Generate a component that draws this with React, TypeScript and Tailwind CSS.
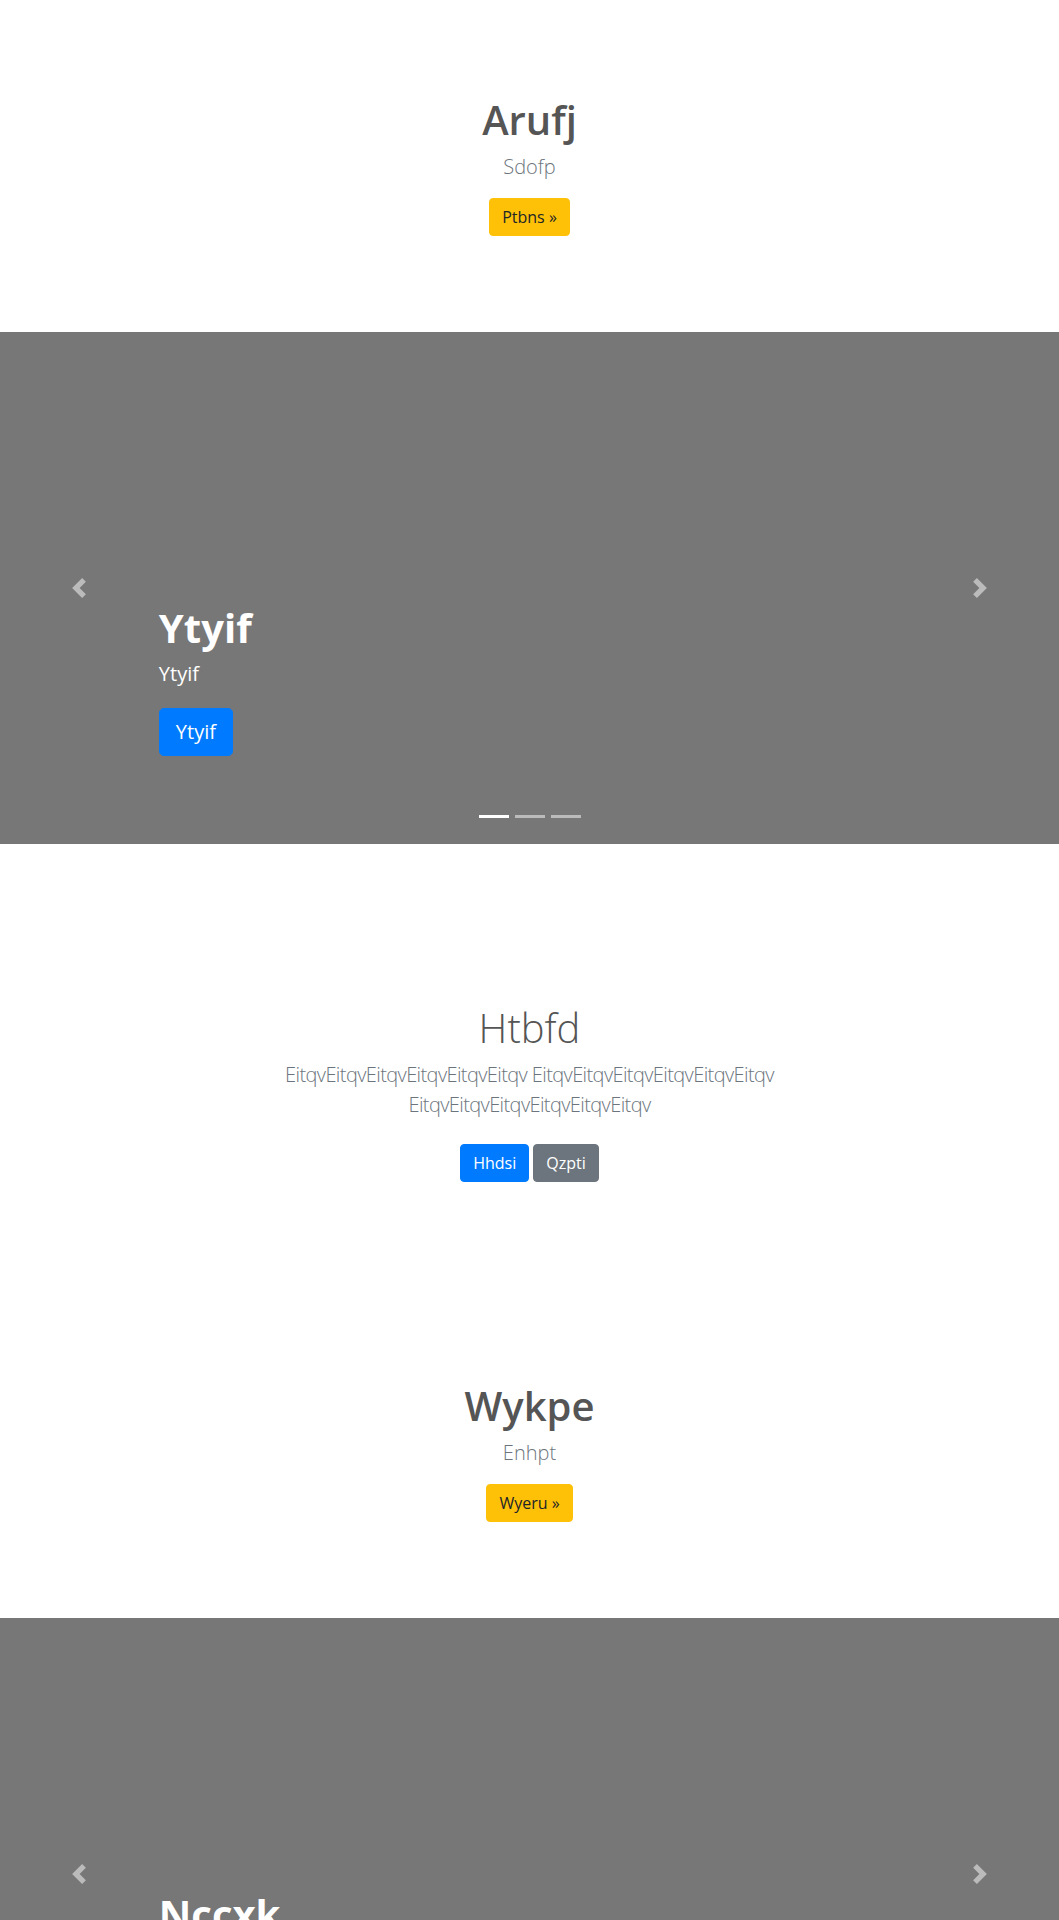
import React from "react";

type Slide = {
  title: string;
  text: string;
  cta: string;
};

function Chevron({ dir }: { dir: "prev" | "next" }) {
  // same 8x8 glyph Bootstrap uses for its carousel controls
  const d =
    dir === "prev"
      ? "M5.25 0l-4 4 4 4 1.5-1.5-2.5-2.5 2.5-2.5-1.5-1.5z"
      : "M2.75 0l-1.5 1.5 2.5 2.5-2.5 2.5 1.5 1.5 4-4-4-4z";
  return (
    <svg width="20" height="20" viewBox="0 0 8 8" fill="#fff">
      <path d={d} />
    </svg>
  );
}

function Carousel({ slide }: { slide: Slide }) {
  return (
    <section className="relative h-[512px] bg-[#777] flex flex-col justify-end px-[15%] pb-[88px] overflow-hidden">
      <div className="text-left text-white">
        <h1 className="text-[40px] leading-[1.2] font-bold mb-2">{slide.title}</h1>
        <p className="text-xl leading-[1.4] font-medium mb-5">{slide.text}</p>
        <a className="inline-block bg-[#007bff] text-white text-xl leading-[1.5] px-4 py-2 rounded-[0.3rem] border border-[#007bff]">
          {slide.cta}
        </a>
      </div>

      {/* controls */}
      <div className="absolute inset-y-0 left-0 w-[15%] flex items-center justify-center opacity-50">
        <Chevron dir="prev" />
      </div>
      <div className="absolute inset-y-0 right-0 w-[15%] flex items-center justify-center opacity-50">
        <Chevron dir="next" />
      </div>

      {/* indicators */}
      <div className="absolute bottom-0 inset-x-0 mb-4 flex justify-center">
        {[0, 1, 2].map((i) => (
          <span
            key={i}
            className={`block w-[30px] h-[3px] mx-[3px] my-[10px] bg-white ${
              i === 0 ? "opacity-100" : "opacity-50"
            }`}
          />
        ))}
      </div>
    </section>
  );
}

function Hero({ title, lead, cta }: { title: string; lead: string; cta: string }) {
  return (
    <section className="bg-white text-center py-[96px]">
      <h1 className="text-[40px] leading-[1.2] font-semibold text-[#555] mb-2">{title}</h1>
      <p className="text-xl leading-[1.5] font-light text-[#6c757d] mb-4">{lead}</p>
      <a className="inline-block bg-[#ffc107] border border-[#ffc107] text-[#212529] text-base leading-6 px-3 py-1.5 rounded">
        {cta}
      </a>
    </section>
  );
}

export default function App() {
  const word = "EitqvEitqvEitqvEitqvEitqvEitqv";

  return (
    <div className="font-['Open_Sans',sans-serif] text-[#212529] bg-white">
      <Hero title="Arufj" lead="Sdofp" cta="Ptbns »" />

      <Carousel slide={{ title: "Ytyif", text: "Ytyif", cta: "Ytyif" }} />

      <section className="bg-white text-center pt-[160px] pb-[96px]">
        <div className="max-w-[40rem] mx-auto px-[15px]">
          <h1 className="text-[40px] leading-[1.2] font-light text-[#555] mb-2">Htbfd</h1>
          <p className="text-xl leading-[1.5] font-light tracking-[-0.03em] text-[#6c757d] mb-4">
            {word} {word} {word}
          </p>
          <p className="leading-[1.5]">
            <a className="inline-block my-2 bg-[#007bff] border border-[#007bff] text-white text-base leading-6 px-3 py-1.5 rounded">
              Hhdsi
            </a>{" "}
            <a className="inline-block my-2 bg-[#6c757d] border border-[#6c757d] text-white text-base leading-6 px-3 py-1.5 rounded">
              Qzpti
            </a>
          </p>
        </div>
      </section>

      <Hero title="Wykpe" lead="Enhpt" cta="Wyeru »" />

      <Carousel slide={{ title: "Nccxk", text: "Nccxk", cta: "Nccxk" }} />
    </div>
  );
}
